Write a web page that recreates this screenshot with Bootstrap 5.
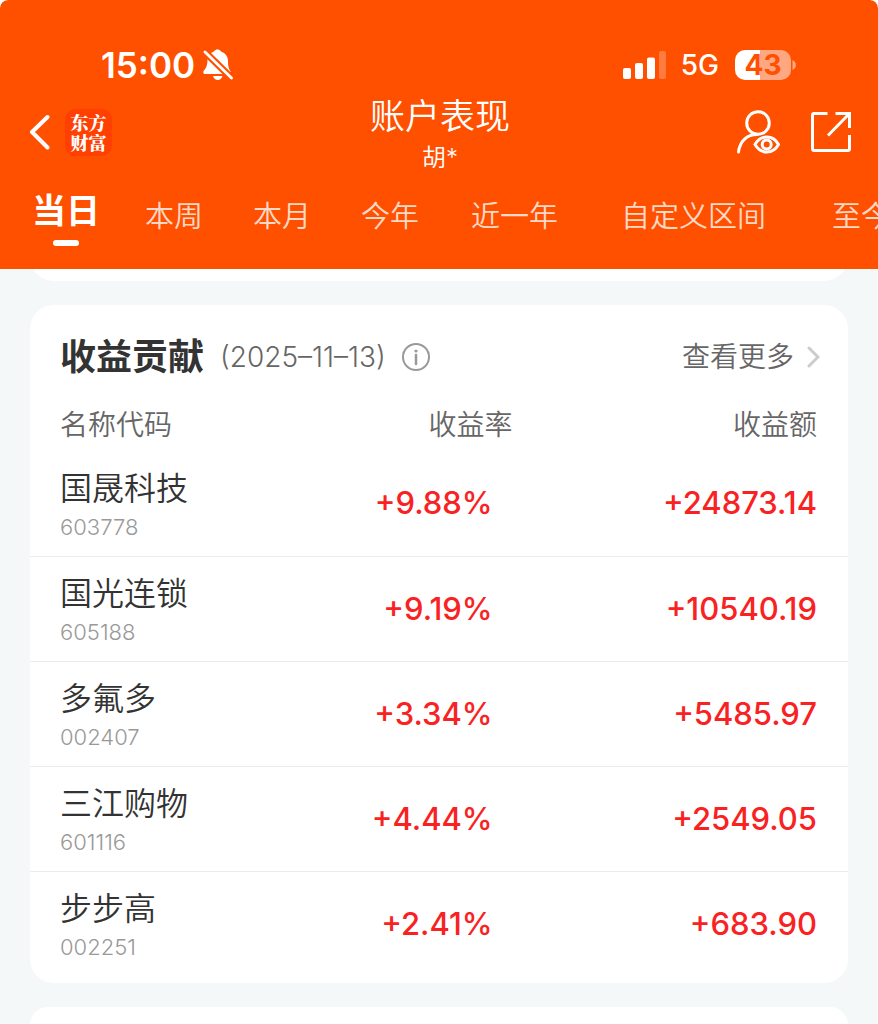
<!DOCTYPE html>
<html lang="zh-CN">
<head>
<meta charset="utf-8">
<meta name="viewport" content="width=device-width, initial-scale=1">
<title>账户表现</title>
<link href="https://cdn.jsdelivr.net/npm/bootstrap@5.3.0/dist/css/bootstrap.min.css" rel="stylesheet">
<style>
  html { background: #fff; }
  body { background: #f4f8f9; color: #333; font-family: Inter, "Noto Sans CJK SC", sans-serif; border-radius: 8px 8px 0 0; overflow-x: hidden; }
  .app-head { background: #ff5000; color: #fff; border-radius: 8px 8px 0 0; z-index: 1; }
  .status-bar { padding: 42px 82px 0 101px; height: 88px; }
  .clock { font-size: 35px; line-height: 44px; font-weight: 600; }
  .signal { margin-right: 14px; }
  .net { font-size: 28px; line-height: 44px; font-weight: 500; }
  .battery { width: 56px; height: 30px; border-radius: 10px; background: linear-gradient(90deg, #fff 44%, #ffa780 44%); color: #ff5000; font-size: 28px; line-height: 30px; font-weight: 700; }
  .title-bar { display: grid; grid-template-columns: 1fr auto 1fr; padding: 0 26px 0 28px; height: 88px; }
  .page-title { font-size: 35px; line-height: 46px; font-weight: 350; padding-top: 5px; }
  .owner { font-size: 24px; line-height: 37px; font-weight: 350; }
  .brand { width: 47px; height: 47px; margin-left: 15px; padding: 3px 5px; border-radius: 10px; background: #ff4000; font-family: "Noto Serif CJK SC", "Noto Sans CJK SC", sans-serif; font-size: 18px; line-height: 20px; font-weight: 900; }
  .icon-btn { color: #fff; background: none; border: 0; padding: 0; }
  .head-tools { gap: 30px; }
  .tabs { height: 93px; padding-left: 12px; overflow: hidden; }
  .tabs a { flex: none; color: #ffd9c7; font-size: 29px; line-height: 46px; padding: 18px 25px 0; text-decoration: none; font-weight: 350; white-space: nowrap; }
  .tabs .tab-mid { padding-left: 27px; padding-right: 27px; }
  .tabs .tab-wide { padding-left: 36px; padding-right: 36px; }
  .tabs .tab-total { padding-left: 30px; }
  .tabs .active { color: #fff; font-size: 34px; line-height: 46px; font-weight: 700; padding: 12px 20px 0; }
  .tabs .active::after { content: ""; display: block; width: 26px; height: 6px; border-radius: 3px; background: #fff; margin: 6px auto 0; }
  .panel { background: #fff; border-radius: 24px; margin: 0 30px 24px; }
  .panel-prev { height: 48px; margin-top: -36px; }
  .panel-next { height: 18px; border-radius: 24px 24px 0 0; margin-bottom: 0; }
  .panel-main { padding-bottom: 7px; }
  .panel-head { padding: 26px 28px 0 30px; }
  .panel-title { font-size: 36px; line-height: 52px; font-weight: 700; }
  .date-note { font-size: 28px; line-height: 52px; color: #666; font-weight: 350; }
  .more { font-size: 28px; line-height: 52px; color: #666; font-weight: 350; text-decoration: none; }
  .gains { table-layout: fixed; width: 100%; }
  .gains th, .gains td { padding: 0; }
  .gains th:first-child { padding-left: 30px; }
  .gains th:last-child, .gains td:last-child { padding-right: 31px; }
  .gains thead th { color: #666; font-size: 28px; line-height: 40px; font-weight: 350; padding-top: 22px; padding-bottom: 6px; }
  .gains tbody tr + tr { border-top: 1px solid #e9ebec; }
  .gains tbody tr { height: 105px; }
  .gains tbody th { font-weight: 350; }
  .gains tbody td { color: #f92223; font-size: 31px; line-height: 44px; font-weight: 500; }
  .gains td.rate { padding-right: 20px; }
  .stock { font-size: 32px; line-height: 44px; padding-top: 3px; }
  .code { font-size: 22px; line-height: 32px; font-weight: 300; color: #999; }
</style>
</head>
<body>
<header class="app-head position-relative">
  <div class="status-bar d-flex align-items-center justify-content-between">
    <div class="d-flex align-items-center gap-2">
      <span class="clock">15:00</span>
      <svg width="30" height="32" viewBox="0 0 30 32" fill="#fff" aria-label="静音">
        <path d="M7.500 4.500C9 3.200 10 3 11 2.500 12 1 13 .5 14.500 .5S17 1 18 2.500C22.500 4 25 7.500 25 12c0 5 .5 8 3 11l-2 1z"/>
        <path d="M4.500 9 20.500 25H2C0 25 0 22.500 1 21.500 4 18 4.500 15 4.500 9z"/>
        <path d="M10 27h9.500c-.8 2.500-2.500 4-4.700 4s-4-1.500-4.800-4z"/>
        <path d="M2 3 28.500 29" stroke="#ff5000" stroke-width="7"/>
        <path d="M2 3 28.500 29" stroke="#fff" stroke-width="2.800" stroke-linecap="round"/>
      </svg>
    </div>
    <div class="d-flex align-items-center">
      <svg class="signal" width="44" height="28" viewBox="0 0 44 28" fill="#fff" aria-label="信号">
        <rect x="0" y="17" width="8" height="11" rx="2"/><rect x="12" y="12" width="8" height="16" rx="2"/><rect x="24" y="6.500" width="8" height="21.500" rx="2"/><rect x="36" y="0" width="7" height="28" rx="2" opacity=".25"/>
      </svg>
      <span class="net me-3">5G</span>
      <span class="battery text-center">43</span>
      <svg width="5" height="10" viewBox="0 0 5 10" aria-hidden="true"><path d="M1.500 0C6 2 6 8 1.500 10z" fill="#ffa780"/></svg>
    </div>
  </div>

  <div class="title-bar">
    <div class="d-flex align-items-center">
      <button class="icon-btn d-flex" type="button" aria-label="返回">
        <svg width="22" height="36" viewBox="0 0 22 36" fill="none" stroke="#fff" stroke-width="4" stroke-linecap="round" stroke-linejoin="round"><path d="M19.500 3 4 18 19.500 33.500"/></svg>
      </button>
      <div class="brand text-center">东方财富</div>
    </div>
    <div class="text-center">
      <h1 class="page-title m-0">账户表现</h1>
      <div class="owner">胡*</div>
    </div>
    <div class="head-tools d-flex align-items-center justify-content-end">
      <button class="icon-btn d-flex" type="button" aria-label="账户查看">
        <svg width="44" height="44" viewBox="0 0 44 44" fill="none" stroke="#fff" stroke-width="3" stroke-linecap="round"><circle cx="22" cy="13" r="11.300"/><path d="M2.500 42C4 31 11 24.500 21 24.500"/><path d="M19 34.500c6-10 18-10 23.500 0-5.500 10-17.500 10-23.500 0z"/><circle cx="30.700" cy="34.500" r="4.500"/></svg>
      </button>
      <button class="icon-btn d-flex" type="button" aria-label="分享">
        <svg width="42" height="42" viewBox="0 0 42 42" fill="none" stroke="#fff" stroke-width="3"><path d="M17.500 2.500H4Q2.500 2.500 2.500 4V37.500Q2.500 39.500 4.500 39.500H38Q39.500 39.500 39.500 38V24M25.500 2.500H39.500V17M39 3 18 24.500"/></svg>
      </button>
    </div>
  </div>

  <nav class="tabs d-flex">
    <a class="active" href="#" aria-current="page">当日</a>
    <a href="#">本周</a>
    <a href="#">本月</a>
    <a href="#">今年</a>
    <a class="tab-mid" href="#">近一年</a>
    <a class="tab-wide" href="#">自定义区间</a>
    <a class="tab-total" href="#">至今</a>
  </nav>
</header>

<main>
  <div class="panel panel-prev"></div>
  <section class="panel panel-main">
    <div class="panel-head d-flex align-items-center">
      <h2 class="panel-title m-0">收益贡献</h2>
      <span class="date-note ms-3">(2025–11–13)</span>
      <button class="icon-btn d-flex ms-3" type="button" aria-label="说明">
        <svg width="28" height="28" viewBox="0 0 28 28" fill="none" stroke="#999" stroke-width="2"><circle cx="14" cy="14" r="13"/><path d="M14 12v9" stroke-width="2.500" stroke-linecap="round"/><circle cx="14" cy="8" r="1.600" fill="#999" stroke="none"/></svg>
      </button>
      <a class="more ms-auto d-flex align-items-center" href="#">查看更多
        <svg class="ms-2" width="18" height="22" viewBox="0 0 18 22" fill="none" stroke="#ccc" stroke-width="3" stroke-linecap="round"><path d="M7 2 16 11 7 20"/></svg>
      </a>
    </div>
    <table class="gains">
      <colgroup><col style="width:35%"><col style="width:24%"><col style="width:41%"></colgroup>
      <thead><tr><th scope="col">名称代码</th><th scope="col" class="text-end">收益率</th><th scope="col" class="text-end">收益额</th></tr></thead>
      <tbody>
        <tr><th scope="row"><div class="stock">国晟科技</div><div class="code">603778</div></th><td class="rate text-end">+9.88%</td><td class="text-end">+24873.14</td></tr>
        <tr><th scope="row"><div class="stock">国光连锁</div><div class="code">605188</div></th><td class="rate text-end">+9.19%</td><td class="text-end">+10540.19</td></tr>
        <tr><th scope="row"><div class="stock">多氟多</div><div class="code">002407</div></th><td class="rate text-end">+3.34%</td><td class="text-end">+5485.97</td></tr>
        <tr><th scope="row"><div class="stock">三江购物</div><div class="code">601116</div></th><td class="rate text-end">+4.44%</td><td class="text-end">+2549.05</td></tr>
        <tr><th scope="row"><div class="stock">步步高</div><div class="code">002251</div></th><td class="rate text-end">+2.41%</td><td class="text-end">+683.90</td></tr>
      </tbody>
    </table>
  </section>
  <div class="panel panel-next"></div>
</main>
<script src="https://cdn.jsdelivr.net/npm/bootstrap@5.3.0/dist/js/bootstrap.bundle.min.js"></script>
</body>
</html>
